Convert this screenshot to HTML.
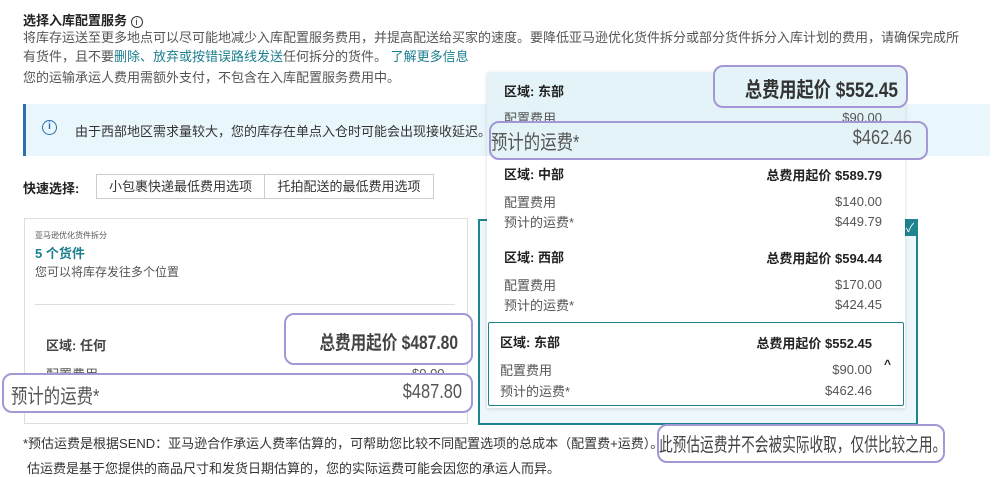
<!DOCTYPE html>
<html><head><meta charset="utf-8"><style>
*{margin:0;padding:0;box-sizing:border-box}
body{width:1002px;height:477px;overflow:hidden;background:#fff;font-family:"Liberation Sans","Noto Sans CJK SC",sans-serif;color:#444;font-size:13px;position:relative}
.a{position:absolute;white-space:nowrap}
.b{font-weight:bold;color:#222}
.g{color:#555}
.r{text-align:right}
.ov{position:absolute;background:#fff;border:2px solid #a497d6;border-radius:10px}
a{color:#1c7f8f;text-decoration:none}
.cr{transform:scaleX(0.82);transform-origin:right center}
.cl{transform:scaleX(0.82);transform-origin:left center}
</style></head><body>
<div class="a b" style="left:23px;top:10px;font-size:13px">选择入库配置服务 <span style="display:inline-block;width:12px;height:12px;border:1px solid #333;border-radius:50%;font-size:9px;text-align:center;line-height:10px;font-weight:normal;vertical-align:0px">i</span></div>
<div class="a g" style="left:23px;top:27px">将库存运送至更多地点可以尽可能地减少入库配置服务费用，并提高配送给买家的速度。要降低亚马逊优化货件拆分或部分货件拆分入库计划的费用，请确保完成所</div>
<div class="a g" style="left:23px;top:46px">有货件，且不要<a>删除、放弃或按错误路线发送</a>任何拆分的货件。 <a>了解更多信息</a></div>
<div class="a g" style="left:23px;top:67px">您的运输承运人费用需额外支付，不包含在入库配置服务费用中。</div>

<div class="a" style="left:23px;top:104px;width:967px;height:52px;background:#e9f6fb;border-left:3px solid #2a6fb0"></div>
<div class="a" style="left:42px;top:120px;width:15px;height:15px;border:1.5px solid #2a6fb0;border-radius:50%;color:#2a6fb0;font-size:10px;text-align:center;line-height:12px;font-weight:bold">i</div>
<div class="a" style="left:75px;top:121px;color:#333">由于西部地区需求量较大，您的库存在单点入仓时可能会出现接收延迟。</div>

<div class="a b" style="left:23px;top:178px;font-size:13px">快速选择:</div>
<div class="a" style="left:96px;top:174px;width:169px;height:25px;border:1px solid #ccc;text-align:center;line-height:23px;color:#333">小包裹快递最低费用选项</div>
<div class="a" style="left:265px;top:174px;width:169px;height:25px;border:1px solid #ccc;border-left:none;text-align:center;line-height:23px;color:#333">托拍配送的最低费用选项</div>

<div class="a" style="left:24px;top:218px;width:444px;height:206px;border:1px solid #ddd"></div>
<div class="a g" style="left:35px;top:230px;font-size:8px">亚马逊优化货件拆分</div>
<div class="a" style="left:35px;top:243px;font-size:13px;font-weight:bold;color:#1c7f8f">5 个货件</div>
<div class="a g" style="left:35px;top:263px;font-size:12px">您可以将库存发往多个位置</div>
<div class="a" style="left:35px;top:304px;width:420px;height:1px;background:#ddd"></div>
<div class="a b" style="left:46px;top:335px;color:#444">区域: 任何</div>
<div class="a g" style="left:46px;top:364px">配置费用</div>
<div class="a g" style="left:412px;top:366px">$0.00</div>
<div class="ov" style="left:284px;top:313px;width:189px;height:52px"></div>
<div class="a b r cr" style="left:258px;top:328px;width:200px;font-size:19px;color:#444">总费用起价 $487.80</div>
<div class="ov" style="left:2px;top:373px;width:471px;height:40px"></div>
<div class="a cl" style="left:11px;top:380px;font-size:20px;color:#555">预计的运费*</div>
<div class="a r cr" style="left:300px;top:381px;width:162px;font-size:20px;color:#555">$487.80</div>

<div class="a" style="left:478px;top:219px;width:440px;height:206px;border:2px solid #1f8390;background:#eef8fc"></div>
<div class="a" style="left:902px;top:220px;width:16px;height:16px;background:#1f8390;color:#fff;font-size:12px;text-align:center;line-height:16px">✓</div>

<div class="a" style="left:487px;top:72px;width:418px;height:336px;background:#fff;box-shadow:0 1px 4px rgba(0,0,0,.15)"></div>
<div class="a" style="left:487px;top:72px;width:418px;height:84px;background:#e3f3f8"></div>
<div class="a b" style="left:504px;top:81px">区域: 东部</div>
<div class="a g" style="left:504px;top:108px">配置费用</div>
<div class="a g r" style="left:782px;top:110px;width:100px">$90.00</div>

<div class="a b" style="left:504px;top:164px">区域: 中部</div>
<div class="a b r" style="left:702px;top:165px;width:180px">总费用起价 $589.79</div>
<div class="a g" style="left:504px;top:192px">配置费用</div>
<div class="a g r" style="left:782px;top:194px;width:100px">$140.00</div>
<div class="a g" style="left:504px;top:212px">预计的运费*</div>
<div class="a g r" style="left:782px;top:214px;width:100px">$449.79</div>

<div class="a b" style="left:504px;top:247px">区域: 西部</div>
<div class="a b r" style="left:702px;top:248px;width:180px">总费用起价 $594.44</div>
<div class="a g" style="left:504px;top:275px">配置费用</div>
<div class="a g r" style="left:782px;top:277px;width:100px">$170.00</div>
<div class="a g" style="left:504px;top:295px">预计的运费*</div>
<div class="a g r" style="left:782px;top:297px;width:100px">$424.45</div>

<div class="a" style="left:488px;top:322px;width:416px;height:84px;border:1.5px solid #1f8390;border-radius:2px"></div>
<div class="a b" style="left:500px;top:332px">区域: 东部</div>
<div class="a b r" style="left:692px;top:333px;width:180px">总费用起价 $552.45</div>
<div class="a g" style="left:500px;top:360px">配置费用</div>
<div class="a g r" style="left:772px;top:362px;width:100px">$90.00</div>
<div class="a g" style="left:500px;top:381px">预计的运费*</div>
<div class="a g r" style="left:772px;top:383px;width:100px">$462.46</div>
<div class="a b" style="left:884px;top:357px;font-size:12px">^</div>

<div class="ov" style="left:713px;top:65px;width:195px;height:43px;background:#e3f3f8"></div>
<div class="a b r cr" style="left:680px;top:74px;width:218px;font-size:21px;color:#333">总费用起价 $552.45</div>
<div class="ov" style="left:489px;top:121px;width:439px;height:39px;background:#e3f3f8"></div>
<div class="a cl" style="left:491px;top:126px;font-size:20px;color:#555">预计的运费*</div>
<div class="a r cr" style="left:780px;top:127px;width:132px;font-size:20px;color:#555">$462.46</div>

<div class="a" style="left:23px;top:433px;font-size:13px;color:#333">*预估运费是根据SEND：亚马逊合作承运人费率估算的，可帮助您比较不同配置选项的总成本（配置费+运费）。</div>
<div class="a" style="left:27px;top:458px;font-size:13px;color:#333">估运费是基于您提供的商品尺寸和发货日期估算的，您的实际运费可能会因您的承运人而异。</div>
<div class="ov" style="left:657px;top:424px;width:288px;height:39px"></div>
<div class="a cl" style="left:659px;top:430px;font-size:19px;color:#444;transform:scaleX(0.72)">此预估运费并不会被实际收取，仅供比较之用。</div>
</body></html>
